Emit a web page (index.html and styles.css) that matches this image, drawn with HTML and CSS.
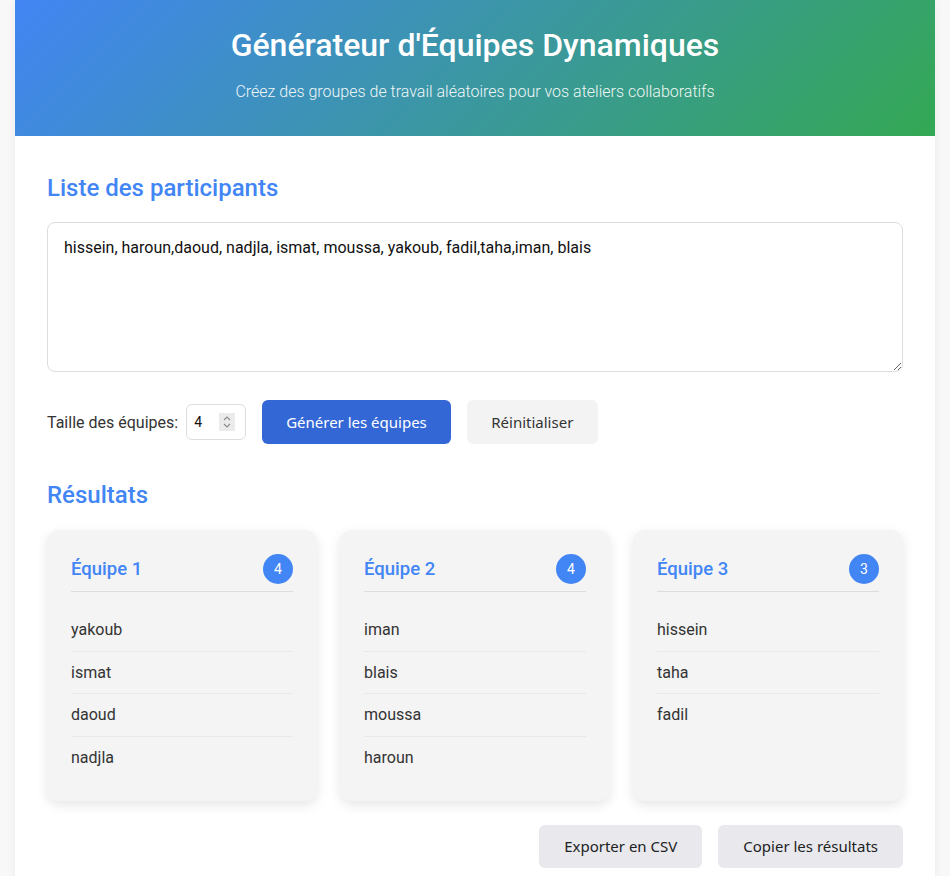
FILE: index.html
```html
<!DOCTYPE html>
<html lang="fr">
<head>
<meta charset="utf-8">
<title>Générateur d'Équipes Dynamiques</title>
<link rel="stylesheet" href="styles.css">
</head>
<body>
<div class="app">
  <header class="hero">
    <h1 class="hero-title">Générateur d'Équipes Dynamiques</h1>
    <p class="hero-sub">Créez des groupes de travail aléatoires pour vos ateliers collaboratifs</p>
  </header>
  <main class="content">
    <h2 class="section-title">Liste des participants</h2>
    <textarea class="participants" spellcheck="true">hissein, haroun,daoud, nadjla, ismat, moussa, yakoub, fadil,taha,iman, blais</textarea>
    <div class="controls">
      <label class="size-label" for="size">Taille des équipes:</label>
      <div class="size-box">
        <input class="size-input" id="size" type="text" value="4">
        <span class="spinner">
          <svg width="10" height="16" viewBox="0 0 10 16"><path d="M2 6 L5 3 L8 6 M2 10 L5 13 L8 10" fill="none" stroke="#8a8a8a" stroke-width="1.1"/></svg>
        </span>
      </div>
      <button class="btn btn-primary">Générer les équipes</button>
      <button class="btn btn-light">Réinitialiser</button>
    </div>
    <h2 class="section-title results-title">Résultats</h2>
    <div class="teams">
      <div class="team">
        <div class="team-head"><span class="team-name">Équipe 1</span><span class="badge">4</span></div>
        <ul class="members">
          <li>yakoub</li><li>ismat</li><li>daoud</li><li>nadjla</li>
        </ul>
      </div>
      <div class="team">
        <div class="team-head"><span class="team-name">Équipe 2</span><span class="badge">4</span></div>
        <ul class="members">
          <li>iman</li><li>blais</li><li>moussa</li><li>haroun</li>
        </ul>
      </div>
      <div class="team">
        <div class="team-head"><span class="team-name">Équipe 3</span><span class="badge">3</span></div>
        <ul class="members">
          <li>hissein</li><li>taha</li><li>fadil</li>
        </ul>
      </div>
    </div>
    <div class="actions">
      <button class="btn btn-grey">Exporter en CSV</button>
      <button class="btn btn-grey">Copier les résultats</button>
    </div>
  </main>
</div>
</body>
</html>
```

FILE: styles.css
```css
* { box-sizing: border-box; }
html, body { margin: 0; padding: 0; }
body {
  background: #f8f8f8;
  font-family: Roboto, "Liberation Sans", sans-serif;
  color: #333;
}
.app {
  width: 920px;
  margin: 0 auto;
  background: #fff;
  box-shadow: 0 0 10px rgba(0,0,0,0.05);
  min-height: 900px;
}
.hero {
  background: linear-gradient(135deg, #4285f4, #34a853);
  color: #fff;
  text-align: center;
  padding: 26px 20px 0;
  height: 136px;
}
.hero-title {
  margin: 0;
  font-size: 32px;
  font-weight: 500;
  line-height: 38px;
}
.hero-sub {
  margin: 18px 0 0;
  font-size: 16px;
  font-weight: 300;
  line-height: 19px;
  opacity: 0.92;
}
.content {
  padding: 38px 32px 32px;
}
.section-title {
  margin: 0 0 20px;
  font-size: 24px;
  font-weight: 500;
  line-height: 28px;
  color: #4285f4;
}
.participants {
  display: block;
  width: 100%;
  height: 150px;
  padding: 15px 16px;
  border: 1px solid #ddd;
  border-radius: 8px;
  font-family: Roboto, "Liberation Sans", sans-serif;
  font-size: 16px;
  line-height: 19px;
  color: #111;
  resize: vertical;
  outline: none;
}
.controls {
  display: flex;
  align-items: center;
  margin-top: 28px;
}
.size-label {
  font-size: 16px;
  color: #333;
  margin-right: 8px;
}
.size-box {
  display: flex;
  align-items: center;
  width: 60px;
  height: 36px;
  border: 1px solid #ddd;
  border-radius: 6px;
  padding: 0 10px 0 7px;
  margin-right: 16px;
}
.size-input {
  width: 24px;
  border: none;
  padding: 0;
  outline: none;
  background: transparent;
  font-family: Roboto, "Liberation Sans", sans-serif;
  font-size: 14px;
  color: #111;
}
.spinner {
  margin-left: auto;
  width: 16px;
  height: 18px;
  background: #ebebeb;
  display: flex;
  align-items: center;
  justify-content: center;
}
.btn {
  height: 44px;
  border: none;
  border-radius: 6px;
  padding: 0 24px;
  font-family: "Noto Sans", "Open Sans", sans-serif;
  font-size: 15px;
  cursor: pointer;
}
.btn-primary {
  background: #3367d6;
  color: #fff;
  margin-right: 16px;
}
.btn-light {
  background: #f3f3f3;
  color: #333;
  width: 131px;
}
.results-title {
  margin-top: 37px;
  margin-bottom: 21px;
}
.teams {
  display: grid;
  grid-template-columns: repeat(3, 1fr);
  gap: 23px;
}
.team {
  background: #f4f4f4;
  border-radius: 12px;
  padding: 24px 24px 22px;
  box-shadow: 0 4px 12px rgba(0,0,0,0.1);
}
.team-head {
  display: flex;
  align-items: center;
  justify-content: space-between;
  padding-bottom: 7px;
  border-bottom: 1px solid #ddd;
}
.team-name {
  font-size: 18.5px;
  font-weight: 500;
  color: #4285f4;
}
.badge {
  width: 30px;
  height: 30px;
  border-radius: 50%;
  background: #4285f4;
  color: #fff;
  font-size: 14px;
  display: flex;
  align-items: center;
  justify-content: center;
}
.members {
  list-style: none;
  margin: 17px 0 0;
  padding: 0;
}
.members li {
  padding: 10px 0;
  font-size: 16px;
  line-height: 21.67px;
  color: #333;
  border-bottom: 1px solid #e8e8e8;
}
.members li:last-child { border-bottom: none; }
.actions {
  display: flex;
  justify-content: flex-end;
  gap: 16px;
  margin-top: 24px;
}
.btn-grey {
  background: #e8e8ed;
  color: #222;
  height: 43px;
  padding: 0 25px;
}
```
